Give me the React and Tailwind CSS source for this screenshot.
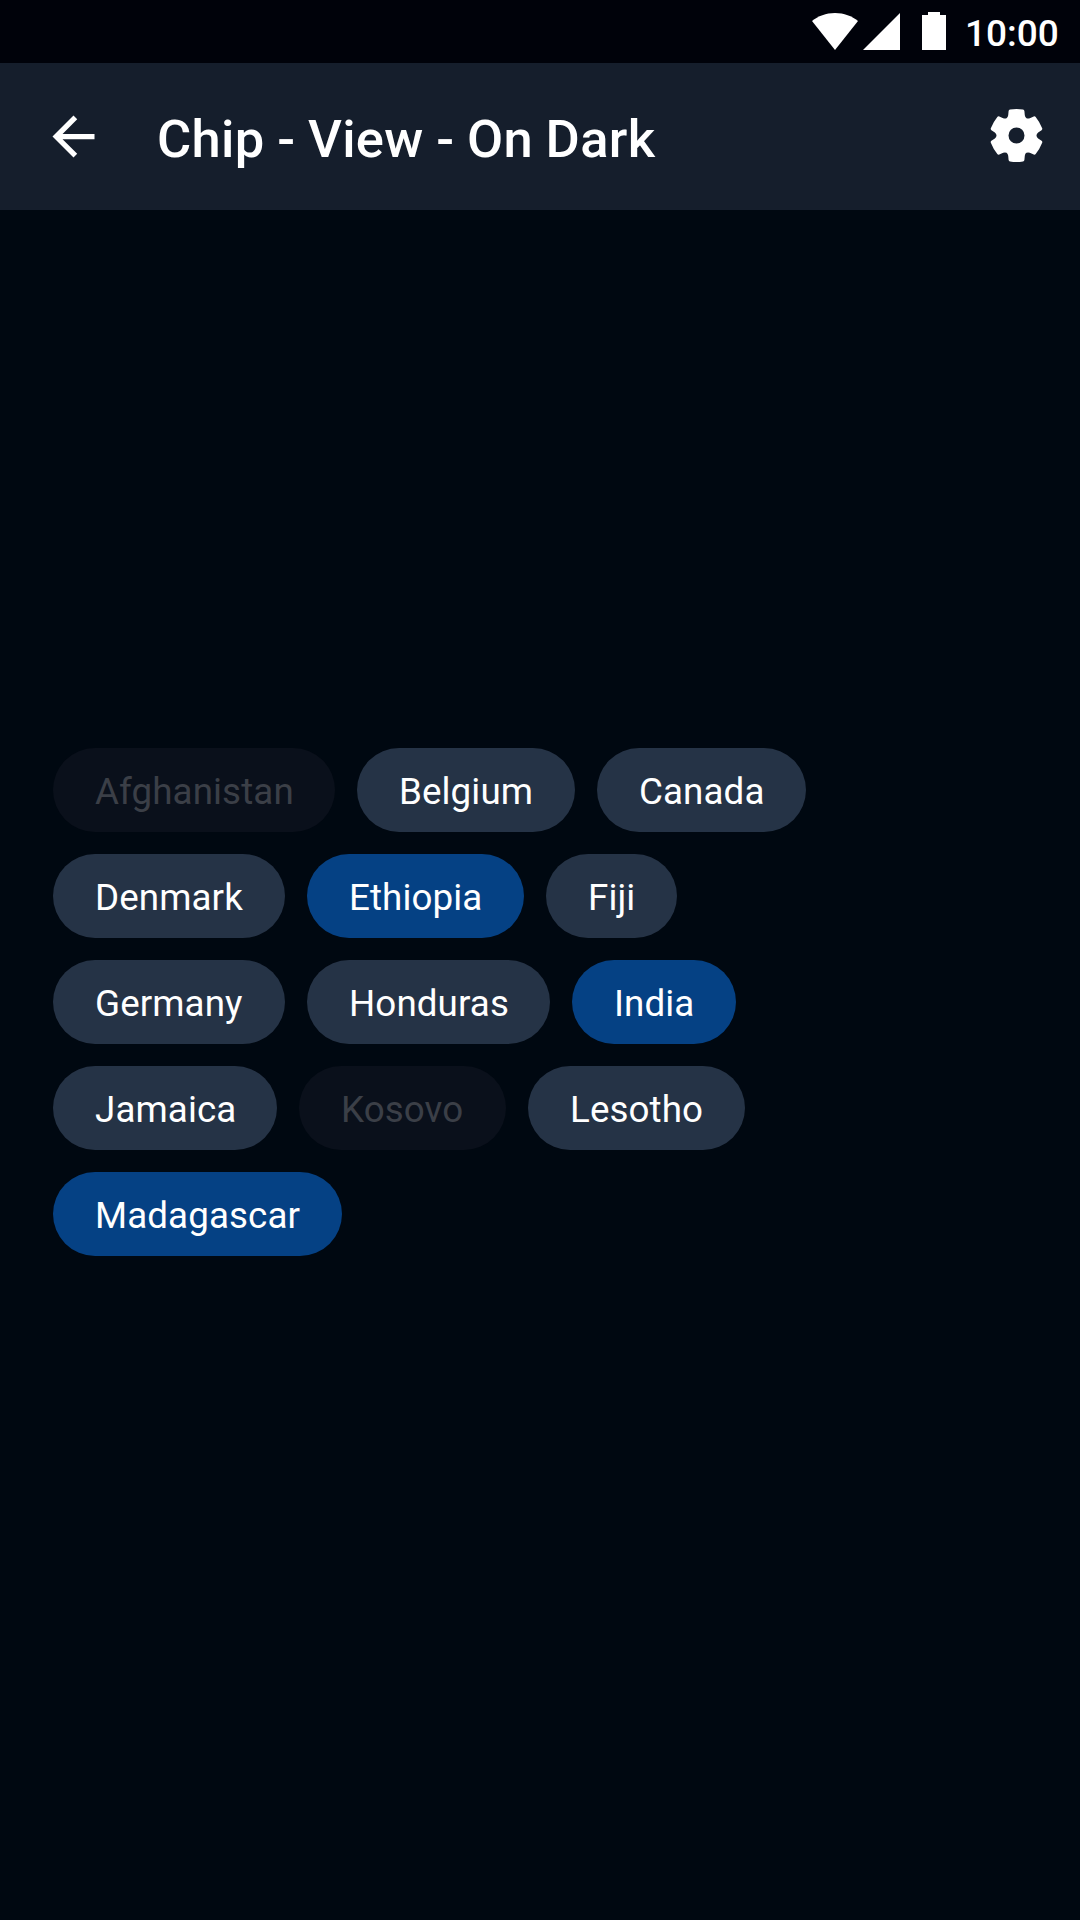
const chipStyles = {
  default: "bg-[#253346] text-white",
  selected: "bg-[#054184] text-white",
  disabled: "bg-[#0a101b] text-[#3b3f47]",
};

const rows = [
  [
    { label: "Afghanistan", state: "disabled", width: "w-[282px]" },
    { label: "Belgium", state: "default", width: "w-[218px]" },
    { label: "Canada", state: "default", width: "w-[209px]" },
  ],
  [
    { label: "Denmark", state: "default", width: "w-[232px]" },
    { label: "Ethiopia", state: "selected", width: "w-[217px]" },
    { label: "Fiji", state: "default", width: "w-[131px]" },
  ],
  [
    { label: "Germany", state: "default", width: "w-[232px]" },
    { label: "Honduras", state: "default", width: "w-[243px]" },
    { label: "India", state: "selected", width: "w-[164px]" },
  ],
  [
    { label: "Jamaica", state: "default", width: "w-[224px]" },
    { label: "Kosovo", state: "disabled", width: "w-[207px]" },
    { label: "Lesotho", state: "default", width: "w-[217px]" },
  ],
  [{ label: "Madagascar", state: "selected", width: "w-[289px]" }],
];

// One gear tooth around the origin; repeated every 60 degrees.
const tooth = [
  ["Q", -8.6, -18.1, -8.3, -20.2],
  ["L", -7.9, -24.4],
  ["Q", -7.7, -25.7, -6.5, -25.9],
  ["Q", 0, -26.9, 6.5, -25.9],
  ["Q", 7.7, -25.7, 7.9, -24.4],
  ["L", 8.3, -20.2],
  ["Q", 8.6, -18.1, 10, -17.3],
];

function gearPath() {
  let d = "M-10 -17.3";
  for (let i = 0; i < 6; i++) {
    const c = Math.cos((i * Math.PI) / 3);
    const s = Math.sin((i * Math.PI) / 3);
    for (const [cmd, ...p] of tooth) {
      d += cmd;
      for (let k = 0; k < p.length; k += 2) {
        d += `${(p[k] * c - p[k + 1] * s).toFixed(2)} ${(p[k] * s + p[k + 1] * c).toFixed(2)} `;
      }
    }
  }
  return d + "ZM8 0A8 8 0 1 0 -8 0A8 8 0 1 0 8 0Z";
}

function Chip({ label, state, width }) {
  return (
    <button
      disabled={state === "disabled"}
      className={`flex h-[84px] items-center rounded-full px-[42px] pt-[4px] text-[36.75px] leading-none tracking-[0.1px] whitespace-nowrap ${width} ${chipStyles[state]}`}
    >
      {label}
    </button>
  );
}

function StatusBar() {
  return (
    <div className="flex h-[63px] items-start bg-[#00020a] pl-[811px] text-white">
      <svg className="mt-3 h-[39px] w-[48px]" viewBox="0 0 48 39" fill="currentColor">
        <path d="M24 38 1 9C7 4 15 1 24 1s17 3 23 8Z" />
      </svg>
      <svg className="mt-3 ml-[4px] h-[39px] w-[38px]" viewBox="0 0 38 39" fill="currentColor">
        <path d="M37 1v37H0Z" />
      </svg>
      <svg className="mt-3 ml-[21px] h-[38px] w-[24px]" viewBox="0 0 24 38" fill="currentColor">
        <path d="M6 0h12v3h6v35H0V3h6Z" />
      </svg>
      <span className="mt-[12px] ml-[19px] text-[37px] leading-[44px] font-medium">10:00</span>
    </div>
  );
}

function AppBar() {
  return (
    <header className="flex h-[147px] items-center bg-[#151e2c] pr-[32px] pl-[42px] text-white">
      <button aria-label="Back">
        <svg className="h-[63px] w-[63px]" viewBox="0 0 24 24" fill="currentColor">
          <path d="M20 11H7.83l5.59-5.59L12 4l-8 8 8 8 1.41-1.41L7.83 13H20v-2z" />
        </svg>
      </button>
      <h1 className="mt-[4px] ml-[52px] flex-1 text-[52.5px] leading-[62px] font-medium tracking-[0.3px] [word-spacing:-0.7px]">
        Chip - View - On Dark
      </h1>
      <button aria-label="Settings" className="-mt-px">
        <svg className="h-[64px] w-[64px]" viewBox="-32.5 -31.5 64 64" fill="currentColor">
          <path fillRule="evenodd" d={gearPath()} />
        </svg>
      </button>
    </header>
  );
}

export default function App() {
  return (
    <div className="flex h-[1920px] w-[1080px] flex-col overflow-hidden bg-[#000811] font-['Roboto',sans-serif]">
      <StatusBar />
      <AppBar />
      <main className="flex flex-1 flex-col gap-[22px] px-[53px] pt-[538px]">
        {rows.map((row) => (
          <div key={row[0].label} className="flex gap-[22px]">
            {row.map((chip) => (
              <Chip key={chip.label} {...chip} />
            ))}
          </div>
        ))}
      </main>
    </div>
  );
}
